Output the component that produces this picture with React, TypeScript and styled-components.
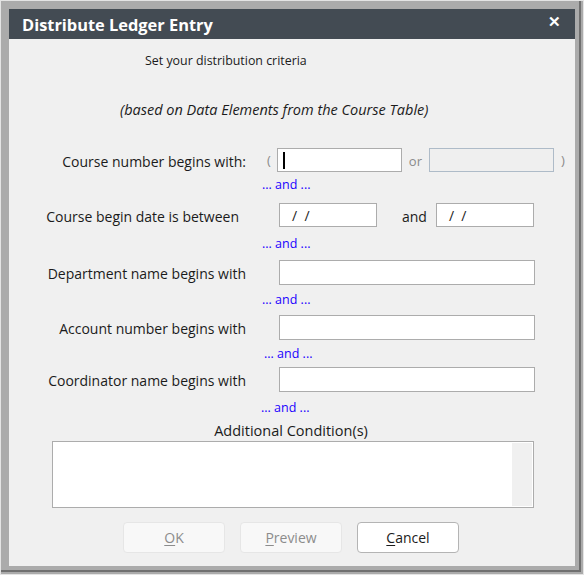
import styled, { createGlobalStyle } from "styled-components";

const Global = createGlobalStyle`
  body {
    margin: 0;
    background: #ababab;
    font-family: "Open Sans", "Noto Sans", sans-serif;
  }
`;

const Shell = styled.div`
  width: 584px;
  height: 575px;
  box-sizing: border-box;
  border: 1px solid #e4e4e4;
  background: #ababab;
`;

const Frame = styled.div`
  width: 580px;
  height: 571px;
  box-sizing: border-box;
  padding: 8px 7px 6px 8px;
  border-right: 2px solid #707070;
  border-bottom: 2px solid #707070;
`;

const Dialog = styled.div`
  width: 566px;
  height: 557px;
  background: #f0f0f0;
  display: flex;
  flex-direction: column;
`;

const TitleBar = styled.div`
  height: 30px;
  background: #434b53;
  color: #fff;
  display: flex;
  align-items: center;
  justify-content: space-between;
  padding: 0 14px 0 13px;
  flex-shrink: 0;
`;

const Title = styled.div`
  font-size: 16.4px;
  font-weight: 700;
`;

const Close = styled.div`
  font-size: 15px;
  font-weight: 700;
  line-height: 1;
  margin-top: -6px;
`;

const Body = styled.div`
  flex: 1;
  display: flex;
  flex-direction: column;
  color: #1b1b1b;
`;

const Note = styled.div<{ $top: number; $left: number; $italic?: boolean; $size: number }>`
  margin-top: ${(p) => p.$top}px;
  padding-left: ${(p) => p.$left}px;
  font-size: ${(p) => p.$size}px;
  line-height: ${(p) => (p.$size > 13 ? 20 : 16)}px;
  font-style: ${(p) => (p.$italic ? "italic" : "normal")};
`;

const Row = styled.div<{ $top: number; $h: number }>`
  margin-top: ${(p) => p.$top}px;
  height: ${(p) => p.$h}px;
  display: grid;
  grid-template-columns: 237px 1fr;
  column-gap: 33px;
  align-items: center;
`;

const Label = styled.div<{ $pr?: number }>`
  text-align: right;
  font-size: 14px;
  padding-top: 2px;
  padding-right: ${(p) => p.$pr ?? 0}px;
  white-space: nowrap;
`;

const Fields = styled.div`
  display: flex;
  align-items: center;
  height: 100%;
`;

const Box = styled.div<{ $w: number; $disabled?: boolean }>`
  width: ${(p) => p.$w}px;
  height: 100%;
  box-sizing: border-box;
  background: ${(p) => (p.$disabled ? "#efefef" : "#fff")};
  border: 1px solid ${(p) => (p.$disabled ? "#aebbc8" : "#acacac")};
  display: flex;
  align-items: center;
  font-size: 14px;
  padding-left: 12px;
  white-space: pre;
`;

const Caret = styled.span`
  display: inline-block;
  width: 2px;
  height: 17px;
  background: #000;
  margin-left: -7px;
`;

const Paren = styled.span<{ $l: number; $r: number }>`
  color: #8a8a8a;
  font-size: 13px;
  margin: 0 ${(p) => p.$r}px 0 ${(p) => p.$l}px;
`;

const Sep = styled.span<{ $l: number; $r: number; $muted?: boolean }>`
  color: ${(p) => (p.$muted ? "#8a8a8a" : "#1b1b1b")};
  font-size: ${(p) => (p.$muted ? 13 : 14)}px;
  margin: 2px ${(p) => p.$r}px 0 ${(p) => p.$l}px;
`;

const And = styled.div<{ $top: number; $left: number }>`
  margin-top: ${(p) => p.$top}px;
  padding-left: ${(p) => p.$left}px;
  font-size: 12.5px;
  line-height: 16px;
  color: #1a00ff;
`;

const Caption = styled.div`
  margin-top: 6px;
  text-align: center;
  font-size: 14.5px;
  line-height: 18px;
  padding-right: 2px;
`;

const Area = styled.div`
  margin: 1px 0 0 43px;
  width: 482px;
  height: 67px;
  box-sizing: border-box;
  border: 1px solid #acacac;
  background: #fff;
  display: flex;
  justify-content: flex-end;
  padding: 1px;
`;

const Scroll = styled.div`
  width: 20px;
  background: #f0f0f0;
`;

const Buttons = styled.div`
  margin: 14px 0 0 114px;
  display: flex;
  gap: 15px;
`;

const Button = styled.div<{ $disabled?: boolean }>`
  width: 102px;
  height: 31px;
  box-sizing: border-box;
  border-radius: 4px;
  border: 1px solid ${(p) => (p.$disabled ? "#e6e6e6" : "#b4b4b4")};
  background: ${(p) => (p.$disabled ? "#f8f8f8" : "#fff")};
  color: ${(p) => (p.$disabled ? "#8c8c8c" : "#1b1b1b")};
  font-size: 14px;
  display: flex;
  align-items: center;
  justify-content: center;
  u {
    text-underline-offset: 2px;
  }
`;

export default function App() {
  return (
    <>
      <Global />
      <Shell>
        <Frame>
          <Dialog>
            <TitleBar>
              <Title>Distribute Ledger Entry</Title>
              <Close>✕</Close>
            </TitleBar>
            <Body>
              <Note $top={14} $left={136} $size={12.4}>
                Set your distribution criteria
              </Note>
              <Note $top={31} $left={111} $size={14.5} $italic>
                (based on Data Elements from the Course Table)
              </Note>

              <Row $top={28} $h={24}>
                <Label>Course number begins with:</Label>
                <Fields>
                  <Paren $l={-12} $r={6}>(</Paren>
                  <Box $w={125}>
                    <Caret />
                  </Box>
                  <Sep $l={7} $r={7} $muted>or</Sep>
                  <Box $w={125} $disabled />
                  <Paren $l={7} $r={0}>)</Paren>
                </Fields>
              </Row>
              <And $top={5} $left={253}>... and ...</And>

              <Row $top={10} $h={24}>
                <Label $pr={7}>Course begin date is between</Label>
                <Fields>
                  <Box $w={98}>{"/  /"}</Box>
                  <Sep $l={25} $r={9}>and</Sep>
                  <Box $w={98}>{"/  /"}</Box>
                </Fields>
              </Row>
              <And $top={9} $left={253}>... and ...</And>

              <Row $top={8} $h={25}>
                <Label>Department name begins with</Label>
                <Fields>
                  <Box $w={256} />
                </Fields>
              </Row>
              <And $top={7} $left={253}>... and ...</And>

              <Row $top={7} $h={25}>
                <Label>Account number begins with</Label>
                <Fields>
                  <Box $w={256} />
                </Fields>
              </Row>
              <And $top={6} $left={255}>... and ...</And>

              <Row $top={5} $h={25}>
                <Label>Coordinator name begins with</Label>
                <Fields>
                  <Box $w={256} />
                </Fields>
              </Row>
              <And $top={8} $left={252}>... and ...</And>

              <Caption>Additional Condition(s)</Caption>
              <Area>
                <Scroll />
              </Area>

              <Buttons>
                <Button $disabled>
                  <span>
                    <u>O</u>K
                  </span>
                </Button>
                <Button $disabled>
                  <span>
                    <u>P</u>review
                  </span>
                </Button>
                <Button>
                  <span>
                    <u>C</u>ancel
                  </span>
                </Button>
              </Buttons>
            </Body>
          </Dialog>
        </Frame>
      </Shell>
    </>
  );
}
